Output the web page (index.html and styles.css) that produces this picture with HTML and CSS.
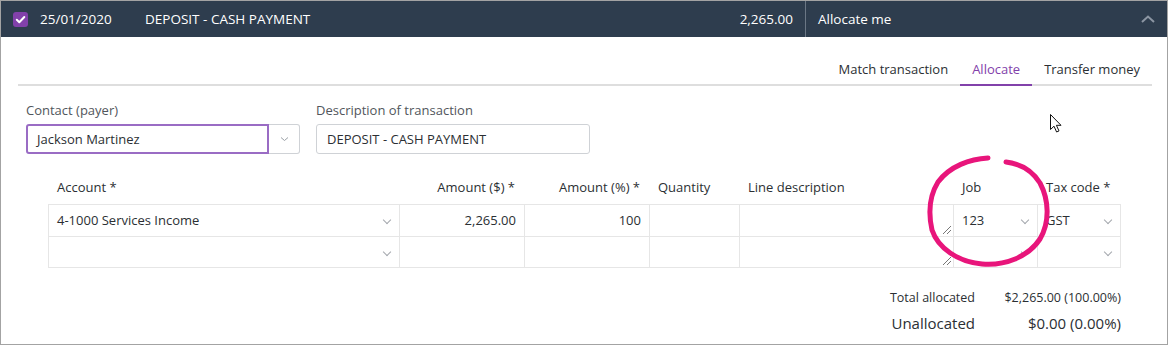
FILE: index.html
```html
<!DOCTYPE html>
<html lang="en">

<head>
    <meta charset="UTF-8">
    <title>Bank transaction - Allocate</title>
    <link rel="stylesheet" href="styles.css">
</head>

<body>
    <div class="frame">
        <div class="txn-bar">
            <span class="check">
                <svg width="15" height="15" viewBox="0 0 15 15"><path d="M3.8 7.8l2.5 2.4L11.3 5" fill="none" stroke="#fff" stroke-width="2" stroke-linecap="round" stroke-linejoin="round"/></svg>
            </span>
            <span class="txn-date">25/01/2020</span>
            <span class="txn-desc">DEPOSIT - CASH PAYMENT</span>
            <span class="txn-amount">2,265.00</span>
            <span class="txn-status">Allocate me</span>
            <svg class="collapse" width="16" height="10" viewBox="0 0 16 10"><path d="M2 8l6-5.5L14 8" fill="none" stroke="#8c96a3" stroke-width="2"/></svg>
        </div>

        <div class="panel">
            <div class="tabs">
                <a class="tab">Match transaction</a>
                <a class="tab active">Allocate</a>
                <a class="tab">Transfer money</a>
            </div>

            <div class="fields">
                <div class="field">
                    <label>Contact (payer)</label>
                    <div class="combo">
                        <div class="combo-input">Jackson Martinez</div>
                        <div class="combo-btn">
                            <svg width="9" height="6" viewBox="0 0 9 6"><path d="M1 1.5l3.5 3 3.5-3" fill="none" stroke="#9aa0a6" stroke-width="1"/></svg>
                        </div>
                    </div>
                </div>
                <div class="field">
                    <label>Description of transaction</label>
                    <div class="text-input">DEPOSIT - CASH PAYMENT</div>
                </div>
            </div>

            <div class="lines">
                <div class="grid head">
                    <div class="th">Account *</div>
                    <div class="th right">Amount ($) *</div>
                    <div class="th right">Amount (%) *</div>
                    <div class="th">Quantity</div>
                    <div class="th">Line description</div>
                    <div class="th">Job</div>
                    <div class="th">Tax code *</div>
                </div>
                <div class="grid row">
                    <div class="td sel">4-1000 Services Income<i class="chev"></i></div>
                    <div class="td right">2,265.00</div>
                    <div class="td right">100</div>
                    <div class="td"></div>
                    <div class="td grip"></div>
                    <div class="td sel">123<i class="chev"></i></div>
                    <div class="td sel">GST<i class="chev"></i></div>
                </div>
                <div class="grid row">
                    <div class="td sel"><i class="chev"></i></div>
                    <div class="td"></div>
                    <div class="td"></div>
                    <div class="td"></div>
                    <div class="td grip"></div>
                    <div class="td sel"><i class="chev"></i></div>
                    <div class="td sel"><i class="chev"></i></div>
                </div>

                <!-- hand drawn highlight round the Job column -->
                <svg class="scribble" width="140" height="125" viewBox="0 0 140 125">
                    <path d="M68 8 C50 9 30 16 18 32 C10 45 8 62 12 80 C18 98 38 112 62 114 C85 116 108 107 120 89 C130 72 129 50 120 33 C113 22 102 14 86 12" fill="none" stroke="#e8157b" stroke-width="5" stroke-linecap="round"/>
                </svg>
            </div>

            <div class="totals">
                <div class="total-row">
                    <span class="total-label">Total allocated</span>
                    <span class="total-value">$2,265.00 (100.00%)</span>
                </div>
                <div class="total-row big">
                    <span class="total-label">Unallocated</span>
                    <span class="total-value">$0.00 (0.00%)</span>
                </div>
            </div>

            <svg class="pointer" width="14" height="22" viewBox="0 0 14 22">
                <path d="M1.5 1.5v15l3.5-3.3 2.6 5.8 2.4-1.1-2.6-5.6h4.6z" fill="#fff" stroke="#111" stroke-width="1" stroke-linejoin="round"/>
            </svg>
        </div>
    </div>
</body>

</html>
```

FILE: styles.css
```css
body {
    margin: 0;
    font-family: "Open Sans", "Noto Sans", sans-serif;
    font-size: 13px;
    color: #2b2f33;
    background-color: #ffffff;
}

.frame {
    width: 1168px;
    height: 345px;
    box-sizing: border-box;
    border: 1px solid #a3a3a3;
    overflow: hidden;
}

/* transaction header */
.txn-bar {
    display: flex;
    align-items: center;
    height: 36px;
    background-color: #2e3d4e;
    color: #ffffff;
    font-size: 13.5px;
}

.check {
    width: 15px;
    height: 15px;
    margin-left: 12px;
    margin-right: 12px;
    border-radius: 3px;
    background-color: #8241aa;
    display: flex;
}

.txn-date {
    width: 105px;
}

.txn-desc {
    flex: 1;
}

.txn-amount {
    padding-right: 12px;
    border-right: 1px solid #6b7785;
    height: 36px;
    line-height: 36px;
}

.txn-status {
    width: 322px;
    padding-left: 12px;
}

.collapse {
    margin-right: 11px;
}

/* body */
.panel {
    position: relative;
    padding: 23px 15px 0 17px;
}

.tabs {
    display: flex;
    justify-content: flex-end;
    border-bottom: 2px solid #dedede;
}

.tab {
    padding: 0 12px 6px;
    margin-bottom: -2px;
    border-bottom: 2px solid transparent;
    color: #2b2f33;
}

.tab.active {
    color: #8241aa;
    border-bottom-color: #8241aa;
}

.fields {
    display: flex;
    gap: 16px;
    margin-top: 15px;
    padding-left: 8px;
}

.field label {
    display: block;
    color: #51565c;
    margin-bottom: 5px;
}

.combo {
    display: flex;
    width: 274px;
    height: 30px;
}

.combo-input {
    flex: 1;
    border: 2px solid #9a6cc4;
    border-radius: 3px 0 0 3px;
    padding: 0 9px;
    line-height: 26px;
}

.combo-btn {
    width: 30px;
    border: 1px solid #cfd2d6;
    border-left: none;
    border-radius: 0 3px 3px 0;
    display: flex;
    align-items: center;
    justify-content: center;
}

.text-input {
    width: 274px;
    height: 30px;
    box-sizing: border-box;
    border: 1px solid #cfd2d6;
    border-radius: 3px;
    padding: 0 10px;
    line-height: 28px;
}

/* allocation lines */
.lines {
    position: relative;
    margin: 24px 29px 0 30px;
}

.grid {
    display: grid;
    grid-template-columns: 351px 125px 125px 90px 214px 84px 84px;
}

.th {
    padding: 0 9px 8px;
    color: #2b2f33;
}

.row {
    height: 32px;
}

.td {
    border-left: 1px solid #e6e6e6;
    border-top: 1px solid #e6e6e6;
    padding: 0 8px;
    line-height: 31px;
    position: relative;
}

.row .td:last-child {
    border-right: 1px solid #e6e6e6;
}

.row:last-of-type .td {
    border-bottom: 1px solid #e6e6e6;
}

.right {
    text-align: right;
}

.sel .chev {
    position: absolute;
    right: 9px;
    top: 12px;
    width: 5px;
    height: 5px;
    border-right: 1px solid #a4a8ad;
    border-bottom: 1px solid #a4a8ad;
    transform: rotate(45deg);
}

.grip::after {
    content: "";
    position: absolute;
    right: 2px;
    bottom: 2px;
    width: 8px;
    height: 8px;
    background: linear-gradient(135deg, transparent 45%, #777 45%, #777 55%, transparent 55%, transparent 70%, #777 70%, #777 80%, transparent 80%);
}

.scribble {
    position: absolute;
    left: 872px;
    top: -28px;
}

/* totals */
.totals {
    margin-top: 21px;
    padding-right: 31px;
    display: flex;
    flex-direction: column;
    align-items: flex-end;
    gap: 7px;
}

.total-row {
    display: flex;
    gap: 18px;
    font-size: 12.5px;
}

.total-row.big {
    font-size: 15px;
}

.total-value {
    min-width: 128px;
    text-align: right;
}

.pointer {
    position: absolute;
    left: 1048px;
    top: 76px;
}
```
